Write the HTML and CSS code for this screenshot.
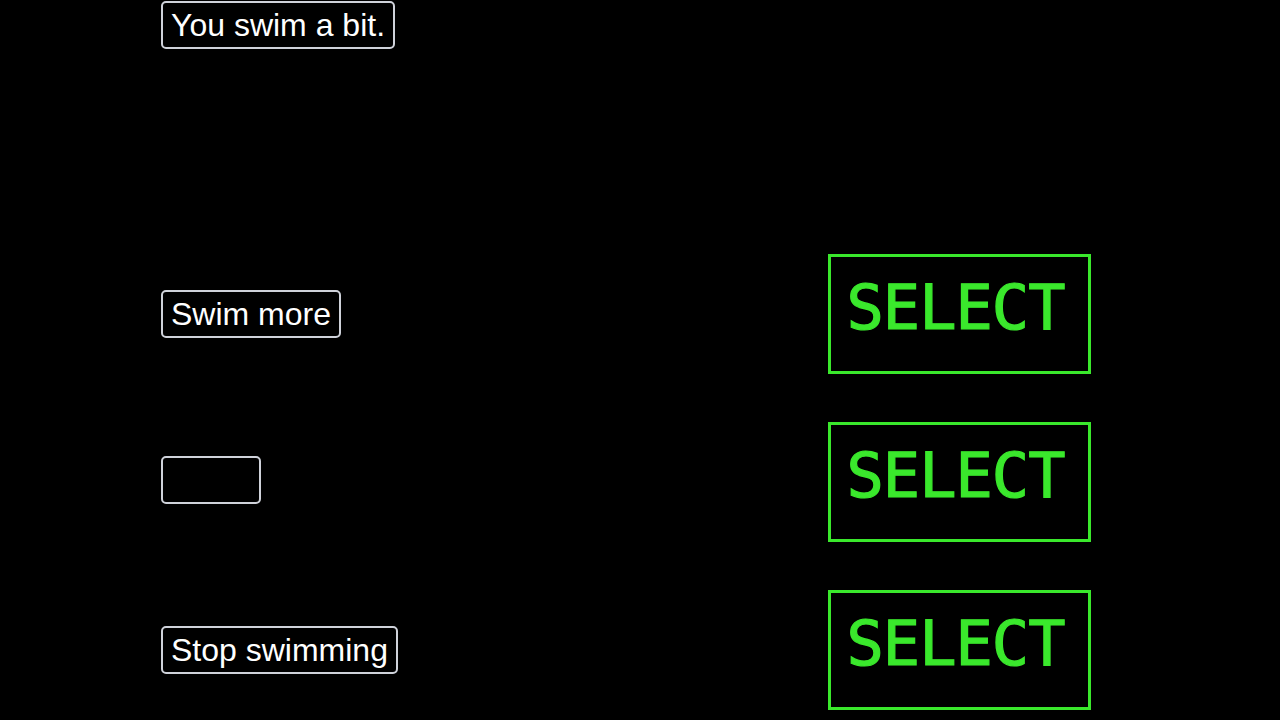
FILE: index.html
```html
<!DOCTYPE html>
<html lang="en">

<head>
    <meta charset="UTF-8">
    <meta name="viewport" content="width=device-width, initial-scale=1.0">
    <title>Swim</title>
    <link rel="stylesheet" href="styles.css">
</head>

<body>
    <main class="screen">
        <!-- story text -->
        <section class="story">
            <div class="bubble">You swim a bit.</div>
        </section>

        <!-- choice rows: label on the left, select button on the right -->
        <ul class="choices">
            <li class="choice">
                <div class="choice-label"><span class="bubble">Swim more</span></div>
                <button class="select-btn">SELECT</button>
            </li>
            <li class="choice">
                <div class="choice-label"><span class="bubble"></span></div>
                <button class="select-btn">SELECT</button>
            </li>
            <li class="choice">
                <div class="choice-label"><span class="bubble">Stop swimming</span></div>
                <button class="select-btn">SELECT</button>
            </li>
        </ul>
    </main>
</body>

</html>
```

FILE: styles.css
```css
/* page */
body {
    margin: 0;
    background-color: #000;
    font-family: "Liberation Sans", Arial, sans-serif;
    color: #fff;
    overflow: hidden;
}

.screen {
    padding-left: 161px;
}

/* story area at the top */
.story {
    height: 254px;
    padding-top: 1px;
    box-sizing: border-box;
}

/* white outlined text box */
.bubble {
    display: inline-flex;
    align-items: center;
    box-sizing: border-box;
    height: 48px;
    min-width: 100px;
    padding: 0 8px;
    border: 2px solid #cfd2da;
    border-radius: 5px;
    background-color: #000;
    font-size: 32px;
    white-space: nowrap;
}

/* list of choices */
.choices {
    list-style: none;
    margin: 0;
    padding: 0;
    display: flex;
    flex-direction: column;
    gap: 48px;
}

.choice {
    display: flex;
    align-items: center;
}

.choice-label {
    width: 667px;
}

/* green select button */
.select-btn {
    box-sizing: border-box;
    width: 263px;
    height: 120px;
    padding: 0 8px 12px 0;
    border: 3px solid #3ae82c;
    background-color: #000;
    color: #3ae82c;
    font-family: "DejaVu Sans Mono", monospace;
    font-size: 62px;
    line-height: 1;
    letter-spacing: -1px;
    -webkit-text-stroke: 1.2px #3ae82c;
    cursor: pointer;
}
```
